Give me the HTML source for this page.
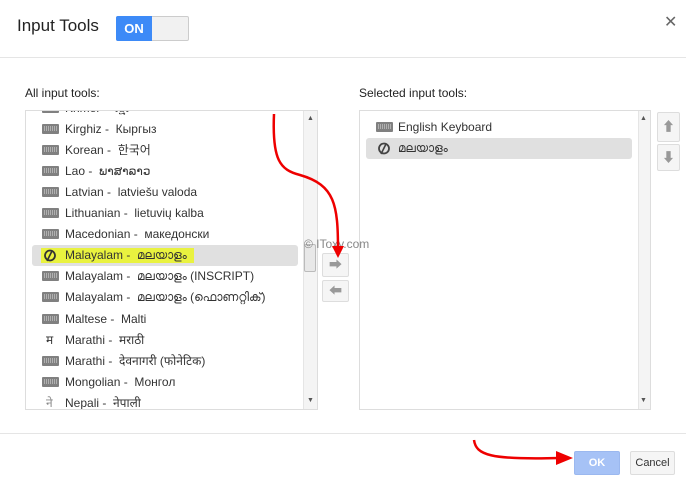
<!DOCTYPE html>
<html><head><meta charset="utf-8"><style>
*{margin:0;padding:0;box-sizing:border-box}
body{width:686px;height:489px;background:#fff;font-family:"Liberation Sans","Noto Sans CJK KR",sans-serif;position:relative;overflow:hidden;color:#222}
.a{position:absolute}
.row{position:absolute;left:6px;height:21px;width:266px;font-size:12px;color:#333;line-height:21px;white-space:nowrap}
.row .ic{position:absolute;left:10px;top:5px;width:17px;height:10px;background:#808080;border-radius:1px}
.row .ic:after{content:"";position:absolute;left:2px;top:2px;width:13px;height:5px;background:repeating-linear-gradient(90deg,#b0b0b0 0 1px,#808080 1px 2px)}
.row .t{position:absolute;left:33px}
.ml{position:absolute;left:11px;top:4px}
.btn{position:absolute;border:1px solid #ddd;background:#f5f5f5;border-radius:2px}
</style></head><body>
<div class="a" style="left:17px;top:16px;font-size:17px;color:#222">Input Tools</div>
<div class="a" style="left:116px;top:16px;width:73px;height:25px;border:1px solid #ccc;border-radius:2px;background:#f1f1f1"></div>
<div class="a" style="left:116px;top:16px;width:36px;height:25px;background:#3d8af7;border-radius:2px 0 0 2px;color:#fff;font-weight:bold;font-size:13px;text-align:center;line-height:25px">ON</div>
<div class="a" style="left:664px;top:12px;font-size:16px;color:#666">✕</div>
<div class="a" style="left:0;top:57px;width:686px;height:1px;background:#e5e5e5"></div>
<div class="a" style="left:25px;top:86px;font-size:12px;color:#222">All input tools:</div>
<div class="a" style="left:359px;top:86px;font-size:12px;color:#222">Selected input tools:</div>

<div class="a" style="left:25px;top:110px;width:293px;height:300px;border:1px solid #ddd;overflow:hidden">
 <div class="a" style="left:277px;top:0;width:14px;height:298px;background:#f4f4f4;border-left:1px solid #e5e5e5"></div>
 <div class="a" style="left:278px;top:133px;width:12px;height:28px;background:#e8e8e8;border:1px solid #bbb;border-radius:2px"></div>
 <div class="a" style="left:281px;top:4px;font-size:7px;color:#555">▲</div>
 <div class="a" style="left:281px;top:286px;font-size:7px;color:#555">▼</div>
 <div class="row" style="top:-13px"><span class="ic"></span><span class="t">Khmer - &nbsp;ខ្មែរ</span></div>
 <div class="row" style="top:8px"><span class="ic"></span><span class="t">Kirghiz - &nbsp;Кыргыз</span></div>
 <div class="row" style="top:29px"><span class="ic"></span><span class="t">Korean - &nbsp;한국어</span></div>
 <div class="row" style="top:50px"><span class="ic"></span><span class="t">Lao - &nbsp;ພາສາລາວ</span></div>
 <div class="row" style="top:71px"><span class="ic"></span><span class="t">Latvian - &nbsp;latviešu valoda</span></div>
 <div class="row" style="top:92px"><span class="ic"></span><span class="t">Lithuanian - &nbsp;lietuvių kalba</span></div>
 <div class="row" style="top:113px"><span class="ic"></span><span class="t">Macedonian - &nbsp;македонски</span></div>
 <div class="row" style="top:134px;background:#e0e0e0;border-radius:3px"><span class="a" style="left:9px;top:3px;width:153px;height:15px;background:#e9f23f"></span><svg class="ml" width="14" height="13"><circle cx="7" cy="6.5" r="5" fill="none" stroke="#333" stroke-width="1.8"/><path d="M4 12 L9 2" stroke="#333" stroke-width="1.6"/></svg><span class="t">Malayalam - &nbsp;മലയാളം</span></div>
 <div class="row" style="top:155px"><span class="ic"></span><span class="t">Malayalam - &nbsp;മലയാളം (INSCRIPT)</span></div>
 <div class="row" style="top:176px"><span class="ic"></span><span class="t">Malayalam - &nbsp;മലയാളം (ഫൊണറ്റിക്)</span></div>
 <div class="row" style="top:198px"><span class="ic"></span><span class="t">Maltese - &nbsp;Malti</span></div>
 <div class="row" style="top:219px"><span class="a" style="left:14px">म</span><span class="t">Marathi - &nbsp;मराठी</span></div>
 <div class="row" style="top:240px"><span class="ic"></span><span class="t">Marathi - &nbsp;देवनागरी (फोनेटिक)</span></div>
 <div class="row" style="top:261px"><span class="ic"></span><span class="t">Mongolian - &nbsp;Монгол</span></div>
 <div class="row" style="top:282px"><span class="a" style="left:14px;color:#888">ने</span><span class="t">Nepali - &nbsp;नेपाली</span></div>
</div>

<div class="btn" style="left:322px;top:253px;width:27px;height:24px;color:#999;font-size:13px;text-align:center;line-height:22px">➡</div>
<div class="btn" style="left:322px;top:280px;width:27px;height:22px;color:#999;font-size:13px;text-align:center;line-height:20px">⬅</div>

<div class="a" style="left:359px;top:110px;width:292px;height:300px;border:1px solid #ddd;overflow:hidden">
 <div class="a" style="left:278px;top:0;width:12px;height:298px;background:#f4f4f4;border-left:1px solid #e5e5e5"></div>
 <div class="a" style="left:280px;top:4px;font-size:7px;color:#555">▲</div>
 <div class="a" style="left:280px;top:286px;font-size:7px;color:#555">▼</div>
 <div class="row" style="top:6px;width:266px"><span class="ic"></span><span class="t" style="left:32px">English Keyboard</span></div>
 <div class="row" style="top:27px;width:266px;background:#e0e0e0;border-radius:3px"><svg class="ml" width="14" height="13"><circle cx="7" cy="6.5" r="5" fill="none" stroke="#444" stroke-width="1.8"/><path d="M4 12 L9 2" stroke="#444" stroke-width="1.6"/></svg><span class="t" style="left:32px">മലയാളം</span></div>
</div>
<div class="btn" style="left:657px;top:112px;width:23px;height:30px;color:#999;font-size:13px;text-align:center;line-height:28px">⬆</div>
<div class="btn" style="left:657px;top:144px;width:23px;height:27px;color:#999;font-size:13px;text-align:center;line-height:25px">⬇</div>

<div class="a" style="left:304px;top:237px;font-size:12px;color:#888">© IToxy.com</div>

<div class="a" style="left:0;top:433px;width:686px;height:1px;background:#e5e5e5"></div>
<div class="a" style="left:574px;top:451px;width:46px;height:24px;background:#a6c2f6;border:1px solid #9bb8ef;border-radius:2px;color:#fff;font-size:11px;font-weight:bold;text-align:center;line-height:22px">OK</div>
<div class="btn" style="left:630px;top:451px;width:45px;height:24px;color:#333;font-size:11px;text-align:center;line-height:22px">Cancel</div>

<svg class="a" style="left:0;top:0" width="686" height="489">
 <path d="M274 114 C272 160 280 170 300 175 C335 185 338 205 338 250" stroke="#e00" stroke-width="2.5" fill="none"/>
 <path d="M332 246 L338 258 L344 246 Z" fill="#e00"/>
 <path d="M474 440 C476 455 490 460 560 458" stroke="#e00" stroke-width="2.5" fill="none"/>
 <path d="M556 451 L573 458 L556 465 Z" fill="#e00"/>
</svg>
</body></html>
